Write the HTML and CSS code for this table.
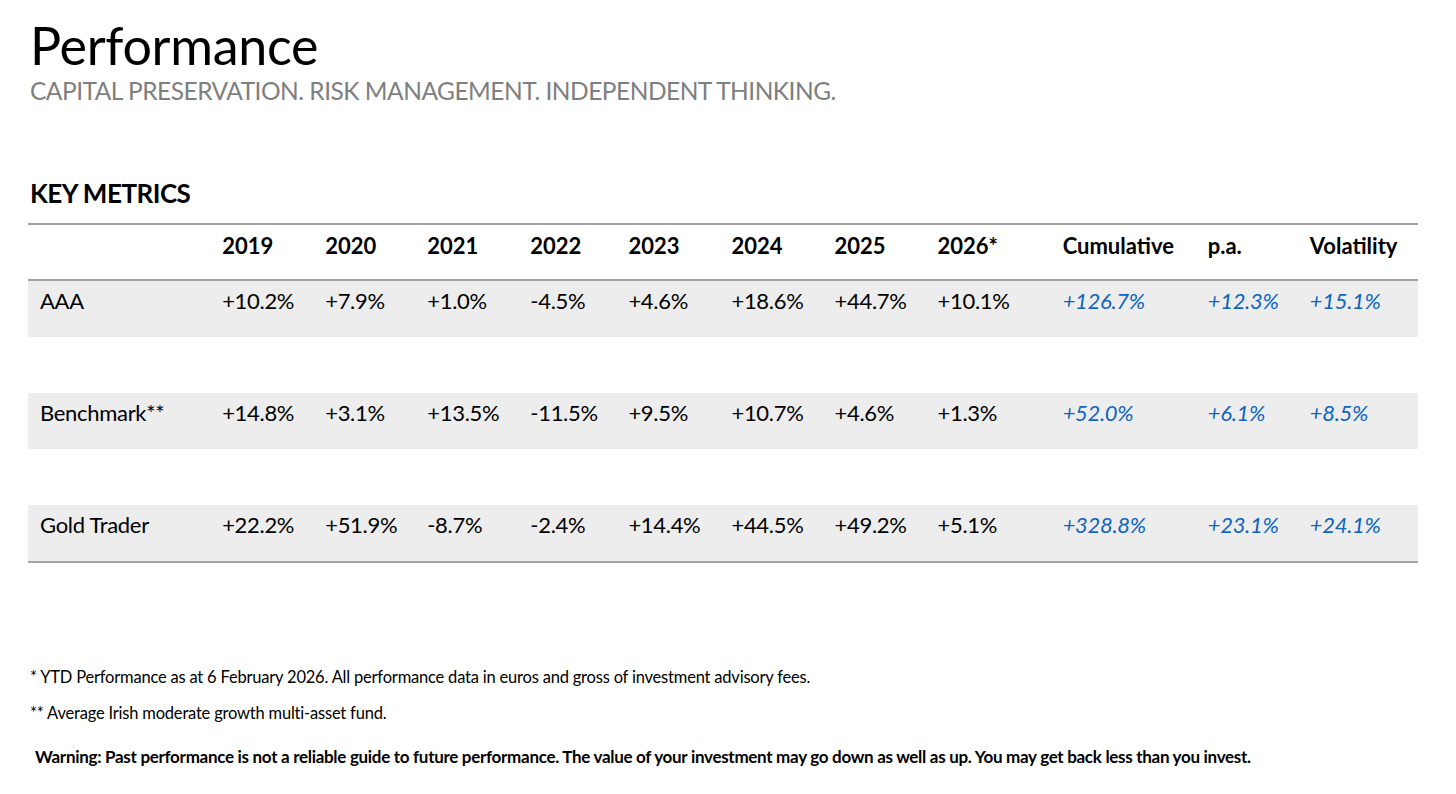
FILE: index.html
```html
<!DOCTYPE html>
<html>
<head>
<meta charset="utf-8">
<link rel="stylesheet" href="styles.css">
</head>
<body>
<div class="page">
  <h1 class="title">Performance</h1>
  <p class="subtitle">CAPITAL PRESERVATION. RISK MANAGEMENT. INDEPENDENT THINKING.</p>
  <h2 class="section">KEY METRICS</h2>
  <table class="metrics">
    <colgroup>
      <col class="c-label"><col class="c-y"><col class="c-y2"><col class="c-y"><col class="c-y3"><col class="c-y"><col class="c-y"><col class="c-y"><col class="c-2026"><col class="c-cum"><col class="c-pa"><col class="c-vol">
    </colgroup>
    <thead>
      <tr class="head">
        <th></th><th>2019</th><th>2020</th><th>2021</th><th>2022</th><th>2023</th><th>2024</th><th>2025</th><th>2026*</th><th>Cumulative</th><th>p.a.</th><th>Volatility</th>
      </tr>
    </thead>
    <tbody>
      <tr class="data">
        <td>AAA</td><td>+10.2%</td><td>+7.9%</td><td>+1.0%</td><td>-4.5%</td><td>+4.6%</td><td>+18.6%</td><td>+44.7%</td><td>+10.1%</td><td class="hl">+126.7%</td><td class="hl">+12.3%</td><td class="hl">+15.1%</td>
      </tr>
      <tr class="gap"><td colspan="12"></td></tr>
      <tr class="data">
        <td>Benchmark**</td><td>+14.8%</td><td>+3.1%</td><td>+13.5%</td><td>-11.5%</td><td>+9.5%</td><td>+10.7%</td><td>+4.6%</td><td>+1.3%</td><td class="hl">+52.0%</td><td class="hl">+6.1%</td><td class="hl">+8.5%</td>
      </tr>
      <tr class="gap"><td colspan="12"></td></tr>
      <tr class="data last">
        <td>Gold Trader</td><td>+22.2%</td><td>+51.9%</td><td>-8.7%</td><td>-2.4%</td><td>+14.4%</td><td>+44.5%</td><td>+49.2%</td><td>+5.1%</td><td class="hl">+328.8%</td><td class="hl">+23.1%</td><td class="hl">+24.1%</td>
      </tr>
    </tbody>
  </table>
  <div class="notes">
    <p class="note">* YTD Performance as at 6 February 2026. All performance data in euros and gross of investment advisory fees.</p>
    <p class="note">** Average Irish moderate growth multi-asset fund.</p>
    <p class="warning">Warning: Past performance is not a reliable guide to future performance. The value of your investment may go down as well as up. You may get back less than you invest.</p>
  </div>
</div>
</body>
</html>
```

FILE: styles.css
```css
html, body {
  margin: 0;
  padding: 0;
  background: #ffffff;
}
body {
  font-family: Lato, "Open Sans", "Liberation Sans", sans-serif;
  color: #000;
}
.page {
  width: 1456px;
  height: 794px;
  box-sizing: border-box;
  padding: 15px 0 0 28px;
}
.title {
  margin: 0 0 0 2px;
  font-size: 52px;
  font-weight: 400;
  line-height: 61px;
  letter-spacing: -0.3px;
}
.subtitle {
  margin: 0 0 0 2px;
  font-size: 24.5px;
  line-height: 30px;
  color: #7f7f7f;
  letter-spacing: -0.5px;
}
.section {
  margin: 71px 0 0 2px;
  font-size: 26px;
  font-weight: 700;
  line-height: 32px;
  letter-spacing: -0.5px;
}
.metrics {
  margin-top: 14px;
  width: 1390px;
  border-collapse: collapse;
  table-layout: fixed;
  font-size: 22px;
}
.c-label { width: 182px; }
.c-y { width: 103px; }
.c-y2 { width: 102px; }
.c-y3 { width: 98px; }
.c-2026 { width: 125px; }
.c-cum { width: 145px; }
.c-pa { width: 102px; }
.c-vol { width: 120px; }
.metrics th, .metrics td {
  padding: 7px 0 0 12px;
  height: 49px;
  line-height: 26px;
  text-align: left;
  vertical-align: top;
  white-space: nowrap;
  letter-spacing: -0.3px;
}
.metrics th {
  font-weight: 700;
  height: 46px;
  padding-top: 8px;
  letter-spacing: 0;
}
.head {
  border-top: 2px solid #a3a3a3;
  border-bottom: 2px solid #a3a3a3;
}
.data td {
  background: #ededed;
}
.gap td {
  background: #ffffff;
}
.last {
  border-bottom: 2px solid #a3a3a3;
}
.hl {
  color: #0e64c0;
  font-style: italic;
}
.notes {
  margin-top: 103px;
  padding-left: 2px;
}
.note {
  margin: 0 0 14px 0;
  font-size: 16.5px;
  line-height: 22px;
  letter-spacing: -0.2px;
}
.warning {
  margin: 22px 0 0 5px;
  font-size: 17px;
  line-height: 22px;
  font-weight: 700;
  letter-spacing: -0.3px;
}
```
